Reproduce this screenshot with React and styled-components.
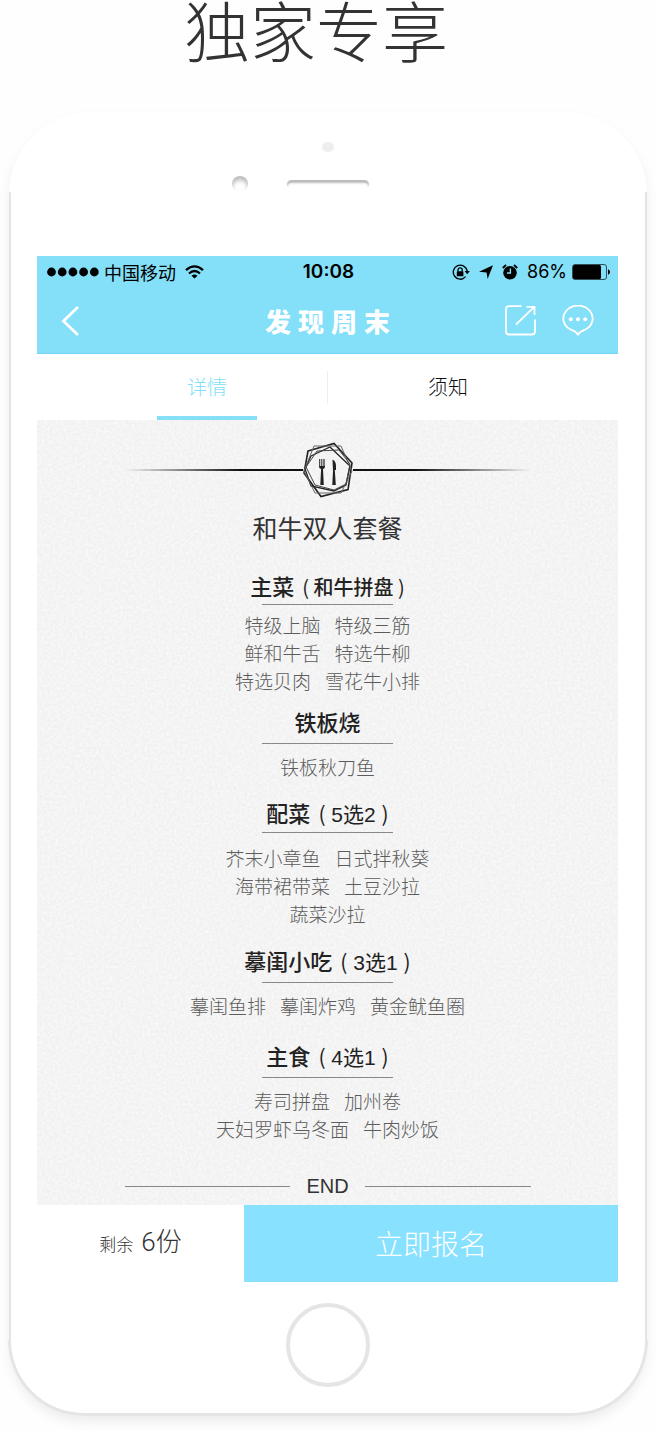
import React, { useState } from "react";
import styled, { createGlobalStyle } from "styled-components";

const sky = "#84dff9";
const edge = "#e5e5e5";
const cjk = `"Noto Sans CJK SC", sans-serif`;

const GlobalStyle = createGlobalStyle`
  *, *::before, *::after { box-sizing: border-box; }
  body { margin: 0; background: #fefefe; color: #333; font-family: ${cjk}; }
  button { margin: 0; padding: 0; border: 0; background: none; color: inherit; font: inherit; cursor: pointer; }
  svg { display: block; }
`;

const Page = styled.main`
  padding: 0 9px 15px;
`;

const Headline = styled.h1`
  margin: 0 24px 0 0;
  height: 112px;
  font-size: 66px;
  font-weight: 300;
  line-height: 56px;
  text-align: center;
`;

const Phone = styled.section`
  border-radius: 82px 82px 76px 76px;
  background: #fff;
  box-shadow: 0 6px 12px rgba(0, 0, 0, 0.07);
`;

const PhoneTop = styled.div`
  display: flex;
  flex-direction: column;
  align-items: center;
  height: 80px;
  padding-top: 30px;
`;

const Sensor = styled.span`
  width: 12px;
  height: 12px;
  border-radius: 50%;
  background: #eee;
`;

const SpeakerRow = styled.div`
  display: grid;
  grid-template-columns: 1fr 82px 1fr;
  align-items: center;
  width: 100%;
  margin-top: 24px;
`;

const Camera = styled.span`
  justify-self: end;
  width: 16px;
  height: 16px;
  margin-right: 39px;
  border-radius: 50%;
  box-shadow: inset 0 4px 4px #bbb;
`;

const Speaker = styled.span`
  height: 9px;
  border-radius: 5px;
  box-shadow: inset 0 3px 2px #bbb;
`;

const PhoneBody = styled.div`
  padding: 64px 27px 0 26px;
  border: solid ${edge};
  border-width: 0 2px;
`;

const PhoneBottom = styled.div`
  margin: 0 -1px;
  height: 134px;
  border: 3px solid ${edge};
  border-top: 0;
  border-radius: 0 0 76px 76px;
  clip-path: inset(58px 0 0 0);
`;

const PhoneChin = styled.div`
  display: grid;
  > * { grid-area: 1 / 1; }
`;

const ChinSides = styled.div`
  height: 58px;
  border: solid ${edge};
  border-width: 0 2px;
`;

const HomeButton = styled.button`
  justify-self: center;
  align-self: start;
  width: 84px;
  height: 84px;
  margin-top: 21px;
  border: 4px solid ${edge};
  border-radius: 50%;
`;

const StatusBar = styled.div`
  display: grid;
  grid-template-columns: 1fr auto 1fr;
  align-items: center;
  height: 32px;
  padding: 0 8px 0 10px;
  background: ${sky};
  color: #000;
`;

const Carrier = styled.div`
  display: flex;
  align-items: center;
  gap: 5px;
  font-size: 18px;
  line-height: 28px;
  > svg:last-child { margin-left: 4px; }
`;

const Clock = styled.time`
  font: 600 19px/28px Inter, sans-serif;
`;

const StatusIcons = styled.div`
  display: flex;
  align-items: center;
  justify-content: flex-end;
  gap: 9px;
  font: 400 18px/28px Inter, sans-serif;
`;

const BatteryGroup = styled.span`
  display: flex;
  align-items: center;
  gap: 5px;
`;

const NavBar = styled.header`
  display: grid;
  grid-template-columns: 1fr auto 1fr;
  align-items: center;
  height: 66px;
  padding: 0 24px;
  border-bottom: 1px solid #74d3f2;
  background: ${sky};
  color: #fff;
`;

const Brand = styled.h2`
  display: flex;
  gap: 7px;
  margin: 0;
  font-size: 26px;
  font-weight: 900;
  line-height: 32px;
`;

const IconButton = styled.button`
  display: grid;
  place-items: center;
  justify-self: start;
`;

const Actions = styled.div`
  display: flex;
  justify-content: flex-end;
  gap: 26px;
`;

const Tabs = styled.div`
  display: grid;
  grid-template-columns: 1fr 1px 1fr;
  align-items: center;
  height: 66px;
  padding: 0 50px;
  background: #fff;
`;

const Tab = styled.button`
  justify-self: center;
  width: 100px;
  height: 66px;
  border-top: 4px solid transparent;
  border-bottom: 4px solid ${(p) => (p.$active ? sky : "transparent")};
  color: ${(p) => (p.$active ? sky : "#111")};
  font-size: 20px;
  font-weight: 300;
  line-height: 28px;
`;

const TabDivider = styled.span`
  height: 33px;
  background: #eee;
`;

const Paper = styled.article`
  position: relative;
  isolation: isolate;
  display: flex;
  flex-direction: column;
  align-items: center;
  padding: 22px 16px 5px;
  background: #f1f1f1;
`;

const Grain = styled.svg`
  position: absolute;
  z-index: -1;
  inset: 0;
  width: 100%;
  height: 100%;
  pointer-events: none;
`;

const Ornament = styled.div`
  display: flex;
  align-items: center;
  width: 100%;
  max-width: 406px;
`;

const Ray = styled.span`
  flex: 1;
  height: 2px;
  background: linear-gradient(to ${(p) => p.$to}, transparent, #111 65%);
`;

const MenuTitle = styled.h3`
  margin: 13px 0 28px;
  color: #333;
  font-size: 25px;
  font-weight: 400;
  line-height: 32px;
`;

const Course = styled.section`
  display: flex;
  flex-direction: column;
  align-items: center;
  margin-top: ${(p) => p.$before}px;
`;

const CourseName = styled.h4`
  display: flex;
  align-items: baseline;
  gap: 8px;
  height: 30px;
  margin: 0;
  color: #222;
  font-size: 22px;
  font-weight: 500;
  line-height: 28px;
`;

const CourseNote = styled.span`
  font-family: ${(p) => (p.$choice ? `"Liberation Sans", ` : "")}${cjk};
  font-size: ${(p) => (p.$choice ? 21 : 20)}px;
  font-weight: ${(p) => (p.$choice ? 400 : 500)};
  line-height: 20px;
`;

const Paren = styled.span`
  font-family: ${cjk};
  font-weight: 400;
`;

const Rule = styled.hr`
  width: 131px;
  height: 1px;
  margin: ${(p) => p.$above}px 0 ${(p) => p.$below}px;
  border: 0;
  background: #888;
`;

const DishRow = styled.div`
  display: flex;
  justify-content: center;
  gap: 14px;
  color: #5c5c5c;
  font-size: 19px;
  font-weight: 300;
  line-height: 28px;
`;

const Ending = styled.div`
  display: flex;
  align-items: center;
  gap: 16px;
  width: 100%;
  max-width: 406px;
  margin-top: 29px;
  color: #333;
  font: 400 20px/28px "Liberation Sans", sans-serif;
  &::before, &::after {
    content: "";
    flex: 1;
    height: 1px;
    background: #888;
  }
`;

const BookingBar = styled.footer`
  display: grid;
  grid-template-columns: 207fr 374fr;
  height: 77px;
`;

const Remaining = styled.p`
  display: flex;
  align-items: baseline;
  justify-content: center;
  gap: 8px;
  height: 77px;
  margin: 0;
  color: #333;
  font-size: 17px;
  font-weight: 300;
  line-height: 74px;
`;

const Count = styled.span`
  font-family: Roboto, ${cjk};
  font-size: 26px;
`;

const BookButton = styled.button`
  height: 77px;
  padding-bottom: 2px;
  background: #88e1ff;
  color: #fff;
  font-size: 28px;
  font-weight: 300;
  line-height: 40px;
`;

const courses = [
  { name: "主菜", note: "和牛拼盘", before: 0, above: 3, below: 6,
    rows: [["特级上脑", "特级三筋"], ["鲜和牛舌", "特选牛柳"], ["特选贝肉", "雪花牛小排"]] },
  { name: "铁板烧", before: 12, above: 6, below: 9, rows: [["铁板秋刀鱼"]] },
  { name: "配菜", note: "5选2", choice: true, before: 17, above: 4, below: 11,
    rows: [["芥末小章鱼", "日式拌秋葵"], ["海带裙带菜", "土豆沙拉"], ["蔬菜沙拉"]] },
  { name: "摹闺小吃", note: "3选1", choice: true, before: 18, above: 6, below: 9,
    rows: [["摹闺鱼排", "摹闺炸鸡", "黄金鱿鱼圈"]] },
  { name: "主食", note: "4选1", choice: true, before: 21, above: 6, below: 9,
    rows: [["寿司拼盘", "加州卷"], ["天妇罗虾乌冬面", "牛肉炒饭"]] },
];

const SignalDots = () => (
  <svg width="52" height="10" aria-hidden="true">
    {[0, 1, 2, 3, 4].map((i) => <circle key={i} cx={4.5 + i * 10.7} cy="5" r="4.4" />)}
  </svg>
);

const WifiIcon = () => (
  <svg width="19" height="14" viewBox="0 0 19 14" fill="none" stroke="#000" strokeWidth="2.3" aria-hidden="true">
    <path d="M1 5.2Q9.5-2.4 18 5.2M4 8.5Q9.5 3.6 15 8.5" />
    <path d="M9.5 13.6 6.5 10.7Q9.5 8.3 12.5 10.7Z" fill="#000" stroke="none" />
  </svg>
);

const LockIcon = () => (
  <svg width="18" height="17" viewBox="0 0 18 17" fill="none" stroke="#000" strokeWidth="1.3" aria-hidden="true">
    <path d="M15.2 7.2A7 7 0 1 0 13.6 12.7M11.5 14.4A7 7 0 0 1 8 15.4" />
    <path d="M12.7 7H17.8L15.2 10.3Z" fill="#000" stroke="none" />
    <rect x="4.8" y="7.3" width="6.6" height="5" rx=".6" fill="#000" stroke="none" />
    <path d="M6 7.5V6a2.1 2.1 0 0 1 4.2 0V7.5" />
  </svg>
);

const LocationIcon = () => (
  <svg width="14" height="14" viewBox="0 0 14 14" aria-hidden="true">
    <path d="M14 .2 8.6 14 7.6 7.6 0 6.8Z" />
  </svg>
);

const AlarmIcon = () => (
  <svg width="16" height="16" viewBox="0 0 16 16" aria-hidden="true">
    <circle cx="8" cy="8.7" r="6.8" />
    <path d="M.8 4 4 1M15.2 4 12 1" stroke="#000" strokeWidth="1.8" />
    <path d="M8.4 4.6V9H5" fill="none" stroke={sky} strokeWidth="1.4" />
  </svg>
);

const BatteryIcon = () => (
  <svg width="38" height="16" viewBox="0 0 38 16" aria-hidden="true">
    <rect x=".5" y=".5" width="34" height="15" rx="2.5" fill="none" stroke="#000" strokeOpacity=".65" />
    <rect x="1" y="1" width="28" height="14" rx="1.5" />
    <path d="M36 5.2Q38 5.8 38 8T36 10.8Z" />
  </svg>
);

const BackIcon = () => (
  <svg width="18" height="30" viewBox="0 0 18 30" fill="none" stroke="#fff" strokeWidth="2.8" aria-hidden="true">
    <path d="M17 1 2.5 15 17 29" />
  </svg>
);

const ShareIcon = () => (
  <svg width="31" height="31" viewBox="0 0 31 31" fill="none" stroke="#fff" strokeWidth="1.8" aria-hidden="true">
    <path d="M16.5 1.2H4Q1 1.2 1 4.2V26.5Q1 29.5 4 29.5H27Q30 29.5 30 26.5V14.5" />
    <path d="M21.5 1.8H29.5V10M29 2.2 11 19.5" />
  </svg>
);

const ChatIcon = () => (
  <svg width="32" height="31" viewBox="0 0 32 31" fill="none" stroke="#fff" strokeWidth="1.8" strokeLinejoin="round" aria-hidden="true">
    <path d="M16 29.8C14.8 27.4 12.6 26.2 10 25.2A14.7 12.9 0 1 1 22 25.2C19.4 26.2 17.2 27.4 16 29.8Z" />
    <g fill="#fff" stroke="none">
      <circle cx="8.8" cy="14.3" r="2" />
      <circle cx="16" cy="14.3" r="2" />
      <circle cx="23.2" cy="14.3" r="2" />
    </g>
  </svg>
);

const CutleryEmblem = () => (
  <svg width="50" height="56" viewBox="0 0 50 56" fill="none" stroke="#222" aria-hidden="true">
    <path d="M5 9 31 1.5 49 21 45 47.5 18 54.5 1 31Z" strokeWidth="1.6" />
    <path d="M8 14 27 5 47 24 43 43 31 49 8 44 2 27Z" strokeWidth="1.3" />
    <path d="M11 4H38L49 29 38 51H12L1 29Z" stroke="#666" />
    <path d="M14 9 36 8 47 22 43 42 31 48 12 43 3 25Z" stroke="#444" />
    <g fill="#222" stroke="none">
      <path d="M16 17h.8v7h1V17h.9v7h1V17h.9v7h.8V17h.6v7.5Q22 26.5 20 27L20.8 43H17.3L18.1 27Q16 26.5 16 24.5Z" />
      <path d="M29.5 17.5Q33 19 33 24V28H31.8L32.8 43H29.3L30 29Z" />
    </g>
  </svg>
);

export default function App() {
  const [tab, setTab] = useState("详情");
  return (
    <Page>
      <GlobalStyle />
      <Headline>独家专享</Headline>
      <Phone>
        <PhoneTop>
          <Sensor />
          <SpeakerRow>
            <Camera />
            <Speaker />
          </SpeakerRow>
        </PhoneTop>
        <PhoneBody>
          <StatusBar>
            <Carrier><SignalDots />中国移动<WifiIcon /></Carrier>
            <Clock>10:08</Clock>
            <StatusIcons>
              <LockIcon />
              <LocationIcon />
              <AlarmIcon />
              <BatteryGroup>86%<BatteryIcon /></BatteryGroup>
            </StatusIcons>
          </StatusBar>
          <NavBar>
            <IconButton aria-label="返回"><BackIcon /></IconButton>
            <Brand>
              <span>发</span><span>现</span><span>周</span><span>末</span>
            </Brand>
            <Actions>
              <IconButton aria-label="分享"><ShareIcon /></IconButton>
              <IconButton aria-label="评论"><ChatIcon /></IconButton>
            </Actions>
          </NavBar>
          <Tabs role="tablist">
            <Tab role="tab" aria-selected={tab === "详情"} $active={tab === "详情"} onClick={() => setTab("详情")}>详情</Tab>
            <TabDivider />
            <Tab role="tab" aria-selected={tab === "须知"} $active={tab === "须知"} onClick={() => setTab("须知")}>须知</Tab>
          </Tabs>
          <Paper>
            <Grain aria-hidden="true">
              <filter id="grain" x="0" y="0" width="100%" height="100%">
                <feTurbulence type="fractalNoise" baseFrequency="0.37" numOctaves="2" seed="4" />
                <feColorMatrix values="0 0 0 0 1  0 0 0 0 1  0 0 0 0 1  2.4 0 0 0 -0.8" />
              </filter>
              <rect width="100%" height="100%" filter="url(#grain)" opacity="0.5" />
            </Grain>
            <Ornament>
              <Ray $to="right" />
              <CutleryEmblem />
              <Ray $to="left" />
            </Ornament>
            <MenuTitle>和牛双人套餐</MenuTitle>
            {courses.map((c) => (
              <Course key={c.name} $before={c.before}>
                <CourseName>
                  {c.name}
                  {c.note && (
                    <CourseNote $choice={c.choice}>
                      <Paren>(</Paren> {c.note} <Paren>)</Paren>
                    </CourseNote>
                  )}
                </CourseName>
                <Rule $above={c.above} $below={c.below} />
                {c.rows.map((row) => (
                  <DishRow key={row[0]}>
                    {row.map((dish) => <span key={dish}>{dish}</span>)}
                  </DishRow>
                ))}
              </Course>
            ))}
            <Ending>END</Ending>
          </Paper>
          <BookingBar>
            <Remaining>剩余<Count>6份</Count></Remaining>
            <BookButton>立即报名</BookButton>
          </BookingBar>
        </PhoneBody>
        <PhoneChin>
          <ChinSides />
          <PhoneBottom />
          <HomeButton aria-label="主屏幕" />
        </PhoneChin>
      </Phone>
    </Page>
  );
}
